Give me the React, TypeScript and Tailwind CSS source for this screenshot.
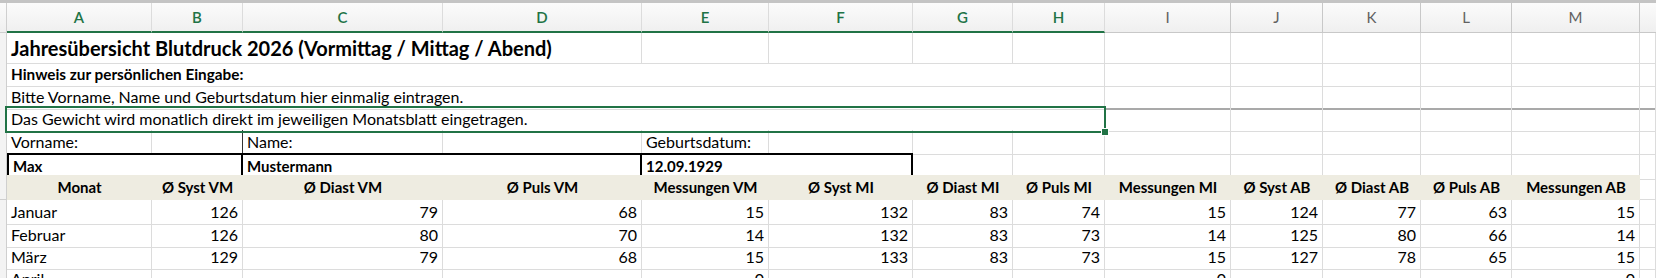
import React from 'react'

// column template: row-header strip, A..M, partial N
const COLS =
  'grid grid-cols-[7px_145px_91px_200px_199px_127px_144px_100px_92px_126px_92px_98px_91px_128px_16px]'

const LETTERS = ['A', 'B', 'C', 'D', 'E', 'F', 'G', 'H', 'I', 'J', 'K', 'L', 'M']

const HEADERS = [
  'Monat',
  'Ø Syst VM',
  'Ø Diast VM',
  'Ø Puls VM',
  'Messungen VM',
  'Ø Syst MI',
  'Ø Diast MI',
  'Ø Puls MI',
  'Messungen MI',
  'Ø Syst AB',
  'Ø Diast AB',
  'Ø Puls AB',
  'Messungen AB',
]

const ROWS: { month: string; values: (number | null)[] }[] = [
  { month: 'Januar', values: [126, 79, 68, 15, 132, 83, 74, 15, 124, 77, 63, 15] },
  { month: 'Februar', values: [126, 80, 70, 14, 132, 83, 73, 14, 125, 80, 66, 14] },
  { month: 'März', values: [129, 79, 68, 15, 133, 83, 73, 15, 127, 78, 65, 15] },
  { month: 'April', values: [null, null, null, 0, null, null, null, 0, null, null, null, 0] },
]

const grid = 'border-r border-b border-[#dcdcdc]'
const side = 'bg-[#f3f3f3] border-r border-b border-[#cfcfcf]'

const Cell: React.FC<{ className?: string; children?: React.ReactNode }> = ({ className = '', children }) => (
  <div className={`flex items-center px-[4px] overflow-visible whitespace-nowrap ${className}`}>{children}</div>
)

const Blank: React.FC<{ n: number; className?: string }> = ({ n, className = '' }) => (
  <>
    {Array.from({ length: n }).map((_, i) => (
      <div key={i} className={`${grid} ${className}`} />
    ))}
  </>
)

const App: React.FC = () => {
  return (
    <div className="relative w-[1656px] h-[278px] overflow-hidden bg-white text-black font-[Lato,'Open_Sans',sans-serif] text-[16px]">
      <div className="h-[3px] bg-[#c4c4c4]" />

      {/* column letters */}
      <div className={`${COLS} h-[30px] bg-gradient-to-b from-[#fbfbfb] to-[#efefef]`}>
        <div className="border-r border-b border-[#cfcfcf]" />
        {LETTERS.map((l, i) => (
          <div
            key={l}
            className={
              i < 8
                ? 'flex items-center justify-center border-r border-[#dcdcdc] border-b-2 border-b-[#217346] text-[#217346] text-[15px] font-semibold'
                : 'flex items-center justify-center border-r border-b border-[#c8c8c8] text-[#616161] text-[15px]'
            }
          >
            {l}
          </div>
        ))}
        <div className="border-b border-[#c8c8c8]" />
      </div>

      {/* row 1: title */}
      <div className={`${COLS} h-[30px]`}>
        <div className={side} />
        <Cell className="col-span-4 border-b border-[#dcdcdc] border-r text-[20px] font-bold">
          Jahresübersicht Blutdruck 2026 (Vormittag / Mittag / Abend)
        </Cell>
        <Blank n={10} />
      </div>

      {/* row 2 */}
      <div className={`${COLS} h-[22px]`}>
        <div className={side} />
        <Cell className={`col-span-8 ${grid} font-bold text-[15.3px]`}>Hinweis zur persönlichen Eingabe:</Cell>
        <Blank n={6} />
      </div>

      {/* row 3 */}
      <div className={`${COLS} h-[22px]`}>
        <div className={`${side}`} />
        <Cell className={`col-span-8 ${grid}`}>Bitte Vorname, Name und Geburtsdatum hier einmalig eintragen.</Cell>
        <Blank n={6} className="border-b-2 border-b-[#a9a9a9]" />
      </div>

      {/* row 4 (selected) */}
      <div className={`${COLS} h-[23px]`}>
        <div className={side} />
        <Cell className={`col-span-8 ${grid}`}>Das Gewicht wird monatlich direkt im jeweiligen Monatsblatt eingetragen.</Cell>
        <Blank n={6} />
      </div>

      {/* row 5 */}
      <div className={`${COLS} h-[23px]`}>
        <div className={side} />
        <Cell className={grid}>Vorname:</Cell>
        <Cell className={`${grid} border-r-[#333333]`} />
        <Cell className={grid}>Name:</Cell>
        <Cell className={grid} />
        <Cell className={grid}>Geburtsdatum:</Cell>
        <Blank n={9} />
      </div>

      {/* row 6: input boxes */}
      <div className={`${COLS} h-[22px]`}>
        <div className={side} />
        <Cell className="col-span-2 border-2 border-black font-bold text-[15px]">Max</Cell>
        <Cell className="col-span-2 border-2 border-l-0 border-black font-bold text-[15px]">Mustermann</Cell>
        <Cell className="col-span-2 border-2 border-l-0 border-black font-bold text-[15px]">12.09.1929</Cell>
        <Blank n={8} />
      </div>

      {/* row 7: table header */}
      <div className={`${COLS} h-[25px]`}>
        <div className={side} />
        {HEADERS.map((h) => (
          <Cell key={h} className="justify-center bg-[#eeece1] font-bold text-[15px]">
            {h}
          </Cell>
        ))}
        <div className={grid} />
      </div>

      {/* data rows */}
      {ROWS.map((r, idx) => (
        <div key={r.month} className={`${COLS} ${idx === 0 ? 'h-[23px]' : 'h-[22px]'}`}>
          <div className={side} />
          <Cell className={grid}>{r.month}</Cell>
          {r.values.map((v, i) => (
            <Cell key={i} className={`${grid} justify-end`}>
              {v}
            </Cell>
          ))}
          <div className={grid} />
        </div>
      ))}

      {/* selection frame around row 4 */}
      <div className="absolute left-[5px] top-[106px] w-[1101px] h-[27px] border-2 border-[#217346] pointer-events-none" />
      <div className="absolute left-[1101px] top-[128px] w-[8px] h-[8px] bg-[#217346] border border-white" />
    </div>
  )
}

export default App
